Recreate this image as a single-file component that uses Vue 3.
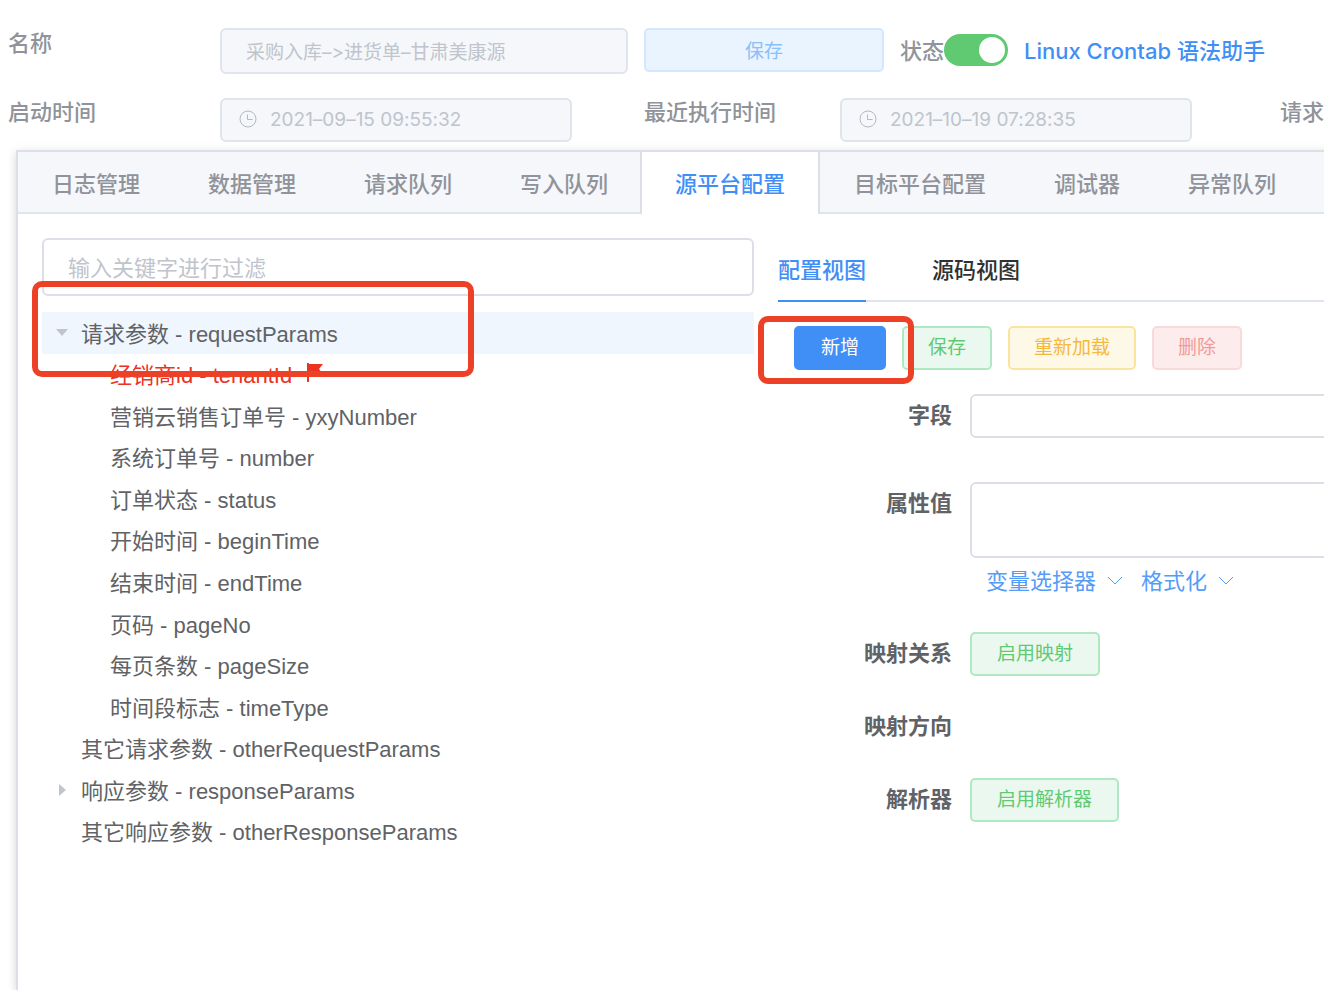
<template>
  <div class="page">
    <div class="header">
      <div class="header-row">
        <label class="caption" for="task-name">名称</label>
        <input id="task-name" class="control name-input" type="text" :value="task.name" disabled />
        <button class="btn btn-primary-plain" type="button" disabled>保存</button>
        <div class="status">
          <label for="task-status">状态</label>
          <input id="task-status" v-model="task.enabled" class="switch" type="checkbox" role="switch" />
          <a class="helper-link" href="#">Linux Crontab 语法助手</a>
        </div>
      </div>
      <div class="header-row times">
        <label class="caption" for="start-time">启动时间</label>
        <div class="date-control">
          <svg class="clock" viewBox="0 0 18 18" width="18" height="18">
            <circle cx="9" cy="9" r="8" />
            <path d="M8.5 4.5v5h5" />
          </svg>
          <input id="start-time" class="control" type="text" :value="task.startTime" disabled />
        </div>
        <label class="caption" for="last-time">最近执行时间</label>
        <div class="date-control">
          <svg class="clock" viewBox="0 0 18 18" width="18" height="18">
            <circle cx="9" cy="9" r="8" />
            <path d="M8.5 4.5v5h5" />
          </svg>
          <input id="last-time" class="control" type="text" :value="task.lastTime" disabled />
        </div>
        <span class="caption request">请求</span>
      </div>
    </div>

    <div class="card">
      <div class="tabs" role="tablist">
        <button
          v-for="tab in tabs"
          :key="tab"
          class="tab"
          :class="{ active: tab === activeTab }"
          type="button"
          role="tab"
          :aria-selected="tab === activeTab"
          @click="activeTab = tab"
        >{{ tab }}</button>
      </div>

      <div class="card-body">
        <div class="tree-pane">
          <input v-model="keyword" class="control filter" type="text" placeholder="输入关键字进行过滤" aria-label="输入关键字进行过滤" />
          <div class="tree" role="tree">
            <div
              v-for="node in nodes"
              :key="node.key"
              class="node"
              :class="{ child: node.child, current: node.current, required: node.required }"
              role="treeitem"
            >
              <span class="toggle">
                <svg v-if="node.toggle === 'open'" viewBox="0 0 12 12" width="12" height="12"><path d="M0 2h12L6 9z" /></svg>
                <svg v-if="node.toggle === 'closed'" viewBox="0 0 12 12" width="12" height="12"><path d="M3 0v12l7-6z" /></svg>
              </span>
              <span>{{ node.label }} - {{ node.key }}</span>
              <svg v-if="node.required" class="flag" viewBox="0 0 18 20" width="18" height="20">
                <path d="M1 0h2v1h14l-4 5 4 5H3v8H1z" />
              </svg>
            </div>
          </div>
          <div class="mark mark-tree"></div>
        </div>

        <div class="config-pane">
          <div class="views" role="tablist">
            <button
              v-for="view in views"
              :key="view"
              class="view"
              :class="{ active: view === activeView }"
              type="button"
              role="tab"
              :aria-selected="view === activeView"
              @click="activeView = view"
            >{{ view }}</button>
          </div>

          <div class="actions">
            <button class="btn btn-primary" type="button">新增</button>
            <button class="btn btn-success" type="button">保存</button>
            <button class="btn btn-warning" type="button">重新加载</button>
            <button class="btn btn-danger" type="button">删除</button>
            <div class="mark mark-add"></div>
          </div>

          <form class="form" @submit.prevent>
            <label class="form-label" for="field">字段</label>
            <div class="form-content field-content">
              <input id="field" v-model="form.field" class="control" type="text" />
            </div>
            <label class="form-label" for="value">属性值</label>
            <div class="form-content">
              <textarea id="value" v-model="form.value" class="control"></textarea>
              <div class="dropdowns">
                <button v-for="menu in menus" :key="menu" class="dropdown" type="button">
                  {{ menu }}
                  <svg viewBox="0 0 16 10" width="16" height="10"><path d="M1 1l7 7 7-7" /></svg>
                </button>
              </div>
            </div>
            <span class="form-label">映射关系</span>
            <div class="form-content">
              <button class="btn btn-success" type="button">启用映射</button>
            </div>
            <span class="form-label">映射方向</span>
            <div class="form-content"></div>
            <span class="form-label">解析器</span>
            <div class="form-content">
              <button class="btn btn-success" type="button">启用解析器</button>
            </div>
          </form>
        </div>
      </div>
    </div>
  </div>
</template>

<script setup>
import { reactive, ref } from 'vue';

const task = reactive({
  name: '采购入库–>进货单–甘肃美康源',
  enabled: true,
  startTime: '2021–09–15 09:55:32',
  lastTime: '2021–10–19 07:28:35'
});

const tabs = ['日志管理', '数据管理', '请求队列', '写入队列', '源平台配置', '目标平台配置', '调试器', '异常队列'];
const activeTab = ref('源平台配置');

const views = ['配置视图', '源码视图'];
const activeView = ref('配置视图');

const menus = ['变量选择器', '格式化'];
const keyword = ref('');
const form = reactive({ field: '', value: '' });

const nodes = [
  { label: '请求参数', key: 'requestParams', toggle: 'open', current: true },
  { label: '经销商id', key: 'tenantId', child: true, required: true },
  { label: '营销云销售订单号', key: 'yxyNumber', child: true },
  { label: '系统订单号', key: 'number', child: true },
  { label: '订单状态', key: 'status', child: true },
  { label: '开始时间', key: 'beginTime', child: true },
  { label: '结束时间', key: 'endTime', child: true },
  { label: '页码', key: 'pageNo', child: true },
  { label: '每页条数', key: 'pageSize', child: true },
  { label: '时间段标志', key: 'timeType', child: true },
  { label: '其它请求参数', key: 'otherRequestParams' },
  { label: '响应参数', key: 'responseParams', toggle: 'closed' },
  { label: '其它响应参数', key: 'otherResponseParams' }
];
</script>

<style>
body {
  margin: 0;
  background: #fff;
}
</style>

<style scoped>
.page {
  display: flex;
  flex-direction: column;
  min-height: 100vh;
  overflow: hidden;
  color: #606266;
  font-family: "Liberation Sans", "Noto Sans CJK SC", sans-serif;
  font-size: 22px;
}

.page * {
  box-sizing: border-box;
}

button,
input,
textarea {
  margin: 0;
  font-family: inherit;
  font-size: inherit;
}

.header {
  padding: 28px 0 8px 8px;
}

.header-row {
  display: grid;
  grid-template-columns: 212fr 408fr 16fr 240fr 16fr 424fr;
  align-items: start;
}

.header-row .btn-primary-plain {
  grid-column: 4;
}

.times {
  grid-template-columns: 212fr 352fr 72fr 196fr 352fr 88fr 44fr;
  margin-top: 24px;
}

.times .caption:nth-of-type(2) {
  grid-column: 4;
}

.caption {
  color: #909399;
  font-weight: 500;
  line-height: 32px;
  white-space: nowrap;
}

.times .caption {
  line-height: 30px;
}

.request {
  grid-column: 7;
}

.control {
  width: 100%;
  height: 44px;
  padding: 0 24px;
  border: 2px solid #dcdfe6;
  border-radius: 6px;
  outline: none;
  background: #fff;
  color: #606266;
}

.control::placeholder {
  color: #c0c4cc;
}

.control:disabled {
  padding-bottom: 2px;
  border-color: #dfe4ed;
  background: #f5f7fb;
  color: #c0c4cc;
  font-family: Inter, "Noto Sans CJK SC", sans-serif;
  font-size: 19px;
  font-feature-settings: "calt" 0;
}

.name-input {
  height: 46px;
}

.date-control {
  position: relative;
}

.date-control .control {
  display: block;
  padding-left: 48px;
}

.clock {
  position: absolute;
  top: 12px;
  left: 19px;
  fill: none;
  stroke: #b4b8c0;
}

.status {
  display: flex;
  grid-column: 6;
  align-items: center;
  height: 44px;
  color: #909399;
  font-weight: 500;
  white-space: nowrap;
}

.status label,
.helper-link {
  padding-bottom: 3px;
}

.switch {
  width: 64px;
  height: 32px;
  padding: 3px;
  border-radius: 16px;
  appearance: none;
  background: #c0c4cc;
  cursor: pointer;
}

.switch::before {
  display: block;
  width: 26px;
  height: 26px;
  border-radius: 50%;
  background: #fff;
  content: "";
}

.switch:checked {
  background: #5fca72;
}

.switch:checked::before {
  margin-left: auto;
}

.helper-link {
  margin-left: 16px;
  color: #3f8ff7;
  font-family: Inter, "Noto Sans CJK SC", sans-serif;
  text-decoration: none;
}

.btn {
  height: 44px;
  padding: 0 24px;
  border: 2px solid;
  border-radius: 5px;
  font-size: 19px;
  line-height: 40px;
  white-space: nowrap;
  cursor: pointer;
}

.btn-primary-plain {
  padding-top: 2px;
  border-color: #d3e7fe;
  background: #e9f4fe;
  color: #89bffb;
}

.btn-primary {
  padding: 0 25px;
  border-color: #3f8ff7;
  background: #3f8ff7;
  color: #fff;
}

.btn-success {
  border-color: #b0e8c3;
  background: #ebf8f0;
  color: #5fca72;
}

.btn-warning {
  border-color: #fbe3a0;
  background: #fef8e7;
  color: #f5b83d;
}

.btn-danger {
  border-color: #f9dadb;
  background: #fcecec;
  color: #f19a9a;
}

.card {
  display: flex;
  flex: 1;
  flex-direction: column;
  margin: 0 -24px 0 16px;
  border: solid #dcdfe6;
  border-width: 2px 0 0 2px;
  box-shadow: 0 4px 8px rgba(0, 0, 0, 0.12), 0 0 12px rgba(0, 0, 0, 0.06);
}

.tabs {
  display: flex;
  height: 62px;
  background: #f5f7fb;
  box-shadow: inset 0 -2px #dfe4ed;
}

.tab {
  flex: none;
  padding: 0 32px 2px;
  border: solid transparent;
  border-width: 0 2px;
  background: none;
  color: #909399;
  font-weight: 500;
  cursor: pointer;
}

.tab.active {
  padding: 0 33px 2px;
  margin-left: -2px;
  border-color: #dcdfe6;
  background: #fff;
  color: #3f8ff7;
}

.card-body {
  display: grid;
  grid-template-columns: 712fr 570fr;
  column-gap: 24px;
  padding: 24px 0 24px 24px;
}

.tree-pane {
  position: relative;
}

.filter {
  display: block;
  height: 58px;
  padding-top: 3px;
}

.tree {
  display: grid;
  grid-auto-rows: 1fr;
  min-height: 540px;
  margin-top: 16px;
}

.node {
  display: flex;
  align-items: center;
  padding-bottom: 2px;
  white-space: nowrap;
}

.node.child {
  padding-left: 29px;
}

.node.current {
  background: #eff6fe;
}

.node.required {
  color: #ea3323;
}

.toggle {
  display: flex;
  width: 39px;
  padding-top: 3px;
  padding-left: 14px;
}

.toggle svg {
  fill: #c0c4cc;
}

.flag {
  margin-left: 14px;
  fill: #ea3323;
}

/* red frames drawn over the steps being pointed out */
.mark {
  position: absolute;
  border: 6px solid #ec4127;
  border-radius: 10px;
  pointer-events: none;
}

.mark-tree {
  top: 43px;
  left: -10px;
  width: 442px;
  height: 96px;
}

.mark-add {
  top: -10px;
  left: -20px;
  width: 156px;
  height: 68px;
}

.views {
  display: flex;
  gap: 66px;
  height: 64px;
  box-shadow: inset 0 -2px #dfe4ed;
}

.view {
  padding: 0 0 2px;
  border: 0;
  border-bottom: 2px solid transparent;
  background: none;
  color: #303133;
  font-weight: 500;
  cursor: pointer;
}

.view.active {
  border-color: #3f8ff7;
  color: #3f8ff7;
}

.actions {
  position: relative;
  display: flex;
  gap: 16px;
  padding: 0 16px;
  margin-top: 24px;
}

.form {
  display: grid;
  grid-template-columns: 192px 1fr;
  row-gap: 29px;
  margin-top: 24px;
}

.form-label {
  height: 44px;
  padding-right: 18px;
  font-weight: 700;
  line-height: 44px;
  text-align: right;
}

.form-content {
  min-height: 44px;
}

.form-content .control {
  display: block;
}

.form-content textarea.control {
  height: 76px;
  resize: none;
}

.form-content .btn {
  padding: 0 25px;
}

.field-content {
  padding-bottom: 15px;
}

.dropdowns {
  display: flex;
  gap: 18px;
  height: 45px;
  padding-bottom: 4px;
  padding-left: 16px;
}

.dropdown {
  display: flex;
  align-items: center;
  gap: 11px;
  padding: 0;
  border: 0;
  background: none;
  color: #559bf8;
  cursor: pointer;
}

.dropdown svg {
  margin-top: 4px;
  fill: none;
  stroke: #559bf8;
}
</style>
